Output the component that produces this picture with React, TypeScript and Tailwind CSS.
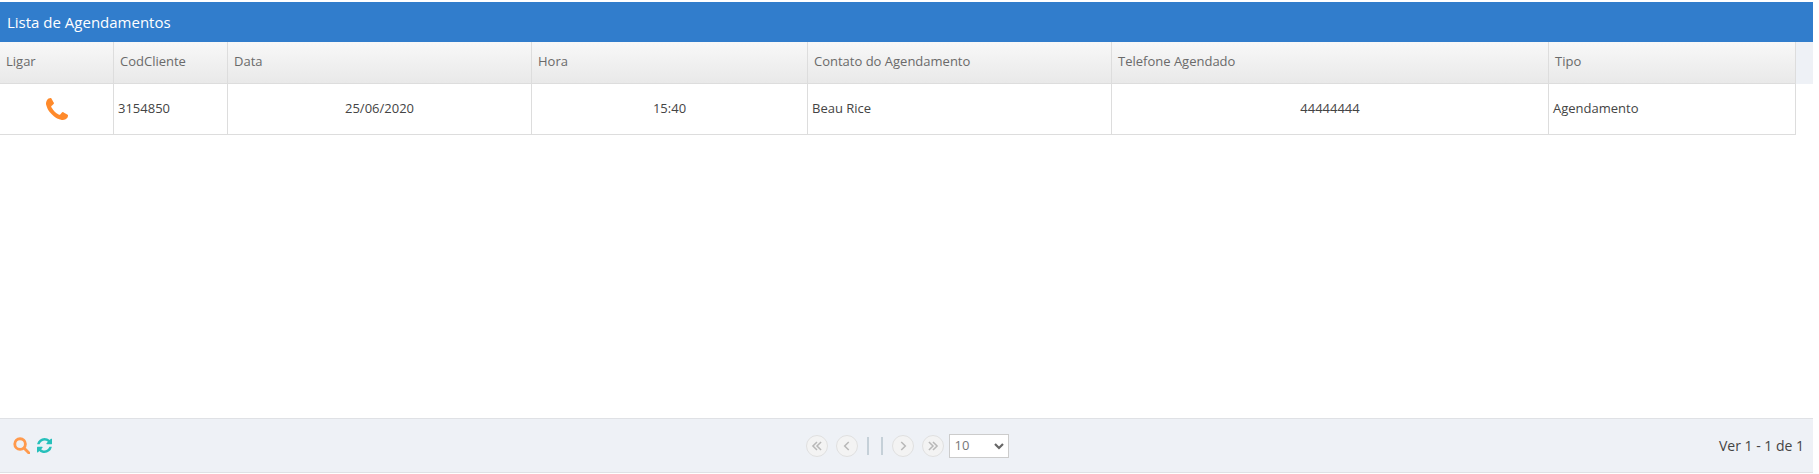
import React from 'react';

const PhoneIcon = () => (
  <svg viewBox="0 0 1408 1408" className="w-[22px] h-[22px]" fill="#ff8a2b">
    <path d="M1408 1112q0 27-10 70.500t-21 68.500q-21 50-122 106-94 51-186 51-27 0-53-3.500t-57.500-12.500-47-14.500-55.500-20.500-49-18q-98-35-175-83-127-79-264-216t-216-264q-48-77-83-175-3-9-18-49t-20.500-55.500-14.500-47-12.500-57.500-3.500-53q0-92 51-186 56-101 106-122 25-11 68.500-21t70.500-10q14 0 21 3 18 6 53 76 11 19 30 54t35 63.500 31 53.500q3 4 17.500 25t21.500 35.500 7 28.500q0 20-28.500 50t-62 55-62 53-28.500 46q0 9 5 22.500t8.500 20.500 14 24 11.500 19q76 137 174 235t235 174q2 1 19 11.500t24 14 20.500 8.500 22.500 5q18 0 46-28.500t53-62 55-62 50-28.500q14 0 28.500 7t35.500 21.500 25 17.500q25 15 53.500 31t63.500 35 54 30q70 35 76 53 3 7 3 21z" />
  </svg>
);

const SearchIcon = () => (
  <svg viewBox="0 0 24 24" className="w-[17px] h-[17px]" fill="none" stroke="#ff9a4d" strokeWidth="4">
    <circle cx="10" cy="10" r="7.500" />
    <path d="M15.500 15.500l7 7" strokeLinecap="round" />
  </svg>
);

const RefreshIcon = () => (
  <svg viewBox="0 0 1536 1536" className="w-[15px] h-[15px]" fill="#26c0bb">
    <path d="M1511 928q0 5-1 7-64 268-268 434.500t-478 166.500q-146 0-282.500-55t-243.500-157l-129 129q-19 19-45 19t-45-19-19-45v-448q0-26 19-45t45-19h448q26 0 45 19t19 45-19 45l-137 137q71 66 161 102t187 36q134 0 250-65t186-179q11-17 53-117 8-23 30-23h192q13 0 22.500 9.500t9.500 22.500zM1536 128v448q0 26-19 45t-45 19h-448q-26 0-45-19t-19-45 19-45l138-138q-148-137-349-137-134 0-250 65t-186 179q-11 17-53 117-8 23-30 23h-199q-13 0-22.500-9.500t-9.500-22.500v-7q65-268 270-434.500t480-166.500q146 0 284 55.500t245 156.500l130-129q19-19 45-19t45 19 19 45z" />
  </svg>
);

const PagerButton = ({ d }: { d: string }) => (
  <button className="w-[22px] h-[22px] rounded-full bg-[#f3f3f3] border border-[#e0e0e0] flex items-center justify-center">
    <svg viewBox="0 0 12 12" className="w-[14px] h-[14px]" fill="none" stroke="#b8b8b8" strokeWidth="1.300">
      <path d={d} />
    </svg>
  </button>
);

const columns = [
  { label: 'Ligar', width: 'w-[114px]' },
  { label: 'CodCliente', width: 'w-[114px]' },
  { label: 'Data', width: 'w-[304px]' },
  { label: 'Hora', width: 'w-[276px]' },
  { label: 'Contato do Agendamento', width: 'w-[304px]' },
  { label: 'Telefone Agendado', width: 'w-[437px]' },
  { label: 'Tipo', width: 'w-[247px]' },
];

const App: React.FC = () => {
  return (
    <div className="h-[474px] w-[1819px] bg-white pt-[2px] pr-[6px] font-['Open_Sans',sans-serif] text-[13px] text-[#444] overflow-hidden">
      <div className="h-[40px] bg-[#317dcc] text-white text-[15px] flex items-center pl-[7px]">
        Lista de Agendamentos
      </div>

      <div className="bg-[#eef1f6] h-[42px]">
        <table className="table-fixed border-separate border-spacing-0 w-[1796px]">
          <thead>
            <tr>
              {columns.map((col) => (
                <th
                  key={col.label}
                  className={`${col.width} h-[42px] p-0 pl-[6px] pb-[2px] text-left font-medium text-[#6a6a6a] bg-gradient-to-b from-[#f8f8f8] to-[#e9e9e9] border-r border-b border-[#dddddd]`}
                >
                  {col.label}
                </th>
              ))}
            </tr>
          </thead>
        </table>
      </div>

      <table className="table-fixed border-separate border-spacing-0 w-[1796px]">
        <tbody>
          <tr>
            <td className="w-[114px] h-[51px] p-0 border-r border-b border-[#dddddd]">
              <div className="flex justify-center"><PhoneIcon /></div>
            </td>
            <td className="w-[114px] p-0 pl-[4px] border-r border-b border-[#dddddd]">3154850</td>
            <td className="w-[304px] p-0 text-center border-r border-b border-[#dddddd]">25/06/2020</td>
            <td className="w-[276px] p-0 text-center border-r border-b border-[#dddddd]">15:40</td>
            <td className="w-[304px] p-0 pl-[4px] border-r border-b border-[#dddddd]">Beau Rice</td>
            <td className="w-[437px] p-0 text-center border-r border-b border-[#dddddd]">44444444</td>
            <td className="w-[247px] p-0 pl-[4px] border-r border-b border-[#dddddd]">Agendamento</td>
          </tr>
        </tbody>
      </table>

      <div className="mt-[283px] h-[55px] bg-[#eef1f6] border-y border-[#dfe1e5] grid grid-cols-[1fr_auto_1fr] items-center">
        <div className="flex items-center gap-[7px] pl-[13px]">
          <SearchIcon />
          <RefreshIcon />
        </div>
        <div className="flex items-center pl-[1px]">
          <PagerButton d="M6 2.500L2.500 6 6 9.500M9.500 2.500L6 6l3.500 3.500" />
          <span className="w-2" />
          <PagerButton d="M7.500 2.500L4 6l3.500 3.500" />
          <span className="w-[2px] h-[18px] bg-[#c5d0d8] ml-[9px]" />
          <span className="w-[2px] h-[18px] bg-[#c5d0d8] ml-[12px] mr-[9px]" />
          <PagerButton d="M4.500 2.500L8 6 4.500 9.500" />
          <span className="w-2" />
          <PagerButton d="M2.500 2.500L6 6 2.500 9.500M6 2.500L9.500 6 6 9.500" />
          <div className="ml-[5px] w-[60px] h-[24px] bg-white border border-[#ccc] flex items-center justify-between pl-[5px] pr-[3px] text-[#777]">
            <span>10</span>
            <svg viewBox="0 0 12 12" className="w-3 h-3" fill="none" stroke="#666" strokeWidth="2.200">
              <path d="M2 4l4 4 4-4" />
            </svg>
          </div>
        </div>
        <div className="text-right pr-[9px] text-[14px] text-[#444]">Ver 1 - 1 de 1</div>
      </div>
    </div>
  );
};

export default App;
